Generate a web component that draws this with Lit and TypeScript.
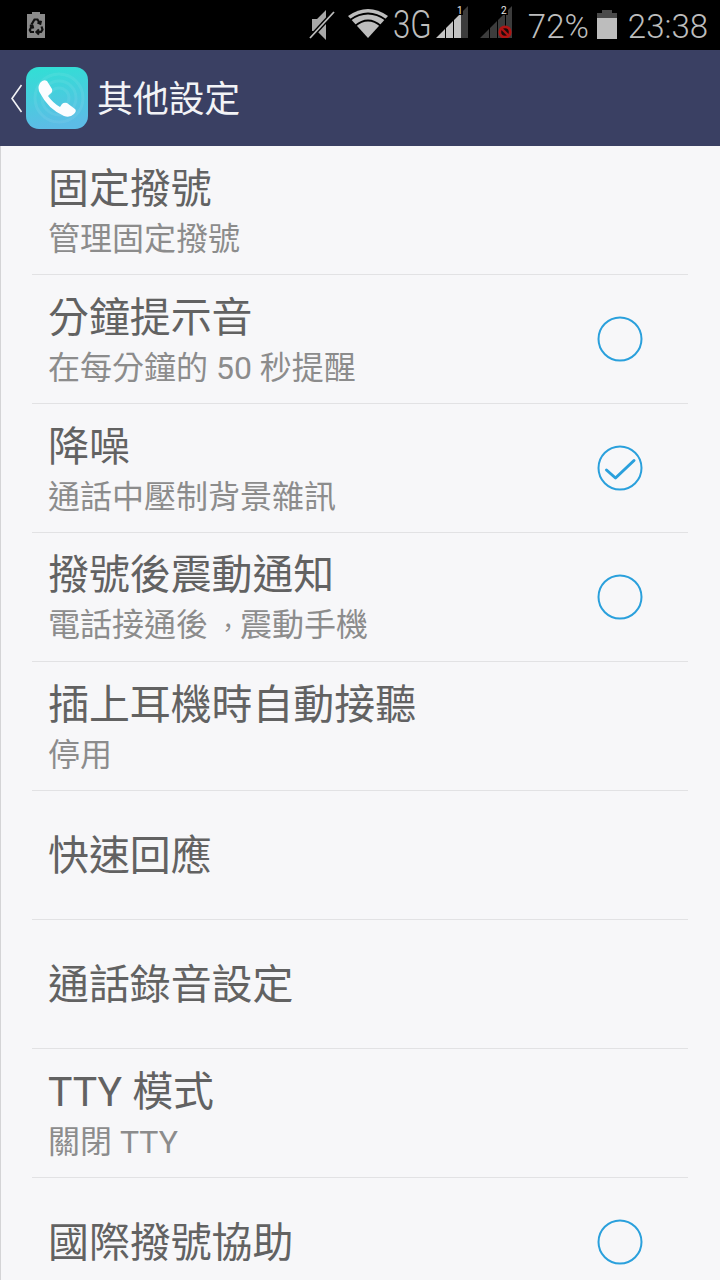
import { LitElement, html, css, svg } from "lit";
import { customElement } from "lit/decorators.js";

type Row = { t: string; s?: string; c?: "off" | "on" };
const rows: Row[] = [
  { t: "固定撥號", s: "管理固定撥號" },
  { t: "分鐘提示音", s: "在每分鐘的 50 秒提醒", c: "off" },
  { t: "降噪", s: "通話中壓制背景雜訊", c: "on" },
  { t: "撥號後震動通知", s: "電話接通後|，|震動手機", c: "off" },
  { t: "插上耳機時自動接聽", s: "停用" },
  { t: "快速回應" },
  { t: "通話錄音設定" },
  { t: "TTY 模式", s: "關閉 TTY" },
  { t: "國際撥號協助", c: "off" },
];

@customElement("app-root")
export class AppRoot extends LitElement {
  static styles = css`
    :host {
      display: block;
      width: 720px;
      height: 1280px;
      overflow: hidden;
      background: #f7f7f9;
      font-family: "Roboto", "Noto Sans CJK TC", sans-serif;
    }
    .status {
      height: 50px;
      background: #000;
      display: flex;
      align-items: center;
      color: #bdbdbd;
      font-size: 33px;
      padding: 0 12px 0 27px;
      box-sizing: border-box;
    }
    .status svg { display: block; flex: none; }
    .spacer { flex: 1; }
    .mute { margin-bottom: 2px; }
    .wifi { margin-left: 13px; margin-bottom: 5px; }
    .g3 {
      display: block;
      width: 38px;
      margin-left: 5px;
      font-size: 38px;
      font-weight: 300;
      line-height: 46px;
      white-space: nowrap;
      transform: scaleX(0.82);
      transform-origin: left center;
    }
    .sig1 { margin-left: 5px; margin-bottom: 6px; }
    .sig2 { margin-left: 12px; margin-bottom: 6px; }
    .pct { margin-left: 16px; margin-top: 2px; font-weight: 300; }
    .batt { margin-left: 8px; margin-bottom: 1px; }
    .time { margin-left: 11px; margin-top: 2px; font-weight: 300; }
    .bar {
      height: 96px;
      background: #3a4063;
      display: flex;
      align-items: center;
      color: #f2f3f6;
      font-size: 36px;
      padding-left: 10px;
      box-sizing: border-box;
    }
    .bar span { margin-top: -4px; letter-spacing: -0.25px; }
    .logo { margin-left: 3px; margin-right: 9px; }
    .bar svg { display: block; flex: none; }
    .list {
      border-left: 1px solid #d4d4d6;
      height: 1134px;
      overflow: hidden;
      box-sizing: border-box;
    }
    .row {
      height: 129px;
      margin: 0 32px 0 31px;
      padding: 0 17px 0 17px;
      border-bottom: 1px solid #e2e2e4;
      box-sizing: border-box;
      display: flex;
      align-items: center;
      justify-content: space-between;
    }
    .text { display: flex; flex-direction: column; margin-left: -1px; padding-top: 2px; }
    .t { font-size: 40.9px; line-height: 54px; color: #626262; }
    .s { font-size: 32px; line-height: 42px; color: #8c8c8c; margin-top: 2px; }
    .cm { font-size: 24px; padding-left: 8px; }
    .c { margin-right: 28px; display: block; flex: none; }
  `;

  private check(kind: "off" | "on") {
    return html`<svg class="c" width="46" height="46" viewBox="0 0 46 46" fill="none" stroke="#2aa0dc">
      <circle cx="23" cy="23" r="21.5" stroke-width="2"></circle>
      ${kind === "on"
        ? svg`<path d="M9.500 25 L18.500 33 L37 15.500" stroke-width="3" stroke-linecap="round" stroke-linejoin="round"></path>`
        : ""}
    </svg>`;
  }

  private sub(s: string) {
    const p = s.split("|");
    return p.length === 3 ? html`${p[0]}<span class="cm">${p[1]}</span>${p[2]}` : s;
  }

  render() {
    return html`
      <div class="status">
        <svg width="18" height="26" viewBox="0 0 18 26">
          <path d="M5 0h8v2h5v24H0V2h5z" fill="#8a8a8a"></path>
          <g fill="none" stroke="#111" stroke-width="2.200">
            <path d="M4.500 12.500L7.500 7.500h3l2.500 4"></path>
            <path d="M10.500 10.500l2.800 1.300 .7-3"></path>
            <path d="M14.500 14.500l1 3-1.500 2.500h-4"></path>
            <path d="M12 17.500L9.500 20l2.500 2.500"></path>
            <path d="M7 20H3.800l-1-2 2-4"></path>
            <path d="M2.800 13.500l2.700 .3 .7 2.700"></path>
          </g>
        </svg>
        <div class="spacer"></div>
        <svg class="mute" width="26" height="34" viewBox="0 0 26 34">
          <path d="M3 12h5l9-9v30l-9-9H3z" fill="#a8a8a8"></path>
          <path d="M1 31L25 5" stroke="#000" stroke-width="4.500"></path>
          <path d="M1 31L25 5" stroke="#bdbdbd" stroke-width="1.800"></path>
        </svg>
        <svg class="wifi" width="40" height="30" viewBox="0 0 40 30">
          <path d="M0 8Q20 -6 40 8L20 30z" fill="#bdbdbd"></path>
          <g fill="none" stroke="#000" stroke-width="1.800">
            <path d="M2 12Q20 -1 38 12"></path>
            <path d="M7 18Q20 7 33 18"></path>
          </g>
        </svg>
        <span class="g3">3G</span>
        <svg class="sig1" width="32" height="32" viewBox="0 0 32 32">
          <path d="M25 7L32 0v32h-7z" fill="#3c3c3c"></path>
          <path d="M0 32L9 23v9zM10 32V22l7-7v17zM18 32V14l7-7v25z" fill="#c4c4c4"></path>
          <rect x="21" y="0" width="6" height="9" fill="#000"></rect>
          <text x="21" y="8" font-size="10" fill="#e8e8e8" font-family="Roboto">1</text>
        </svg>
        <svg class="sig2" width="32" height="32" viewBox="0 0 32 32">
          <path d="M0 32L9 23v9zM10 32V22l7-7v17zM18 32V14l7-7v25zM26 6l6-6v32h-6z" fill="#3c3c3c"></path>
          <rect x="21" y="0" width="7" height="9" fill="#000"></rect>
          <text x="21" y="8" font-size="10" fill="#e8e8e8" font-family="Roboto">2</text>
          <circle cx="25" cy="26" r="5.200" fill="#1a0a0a" stroke="#b01414" stroke-width="2.800"></circle>
          <path d="M21.500 22.500l7 7" stroke="#b01414" stroke-width="2.400"></path>
        </svg>
        <span class="pct">72%</span>
        <svg class="batt" width="20" height="29" viewBox="0 0 20 29">
          <path d="M5 0h10v3h5v6H0V3h5z" fill="#4a4a4a"></path>
          <path d="M0 8h20v21H0z" fill="#bdbdbd"></path>
        </svg>
        <span class="time">23:38</span>
      </div>
      <div class="bar" lang="zh-Hant">
        <svg width="13" height="29" viewBox="0 0 13 29" fill="none" stroke="#f2f3f6" stroke-width="1.600">
          <path d="M11.500 1L2 14.500 11.500 28"></path>
        </svg>
        <svg class="logo" width="62" height="62" viewBox="0 0 62 62">
          <defs>
            <linearGradient id="g" x1="0" y1="0" x2="0.150" y2="1">
              <stop offset="0" stop-color="#30e0d4"></stop>
              <stop offset="1" stop-color="#5cbce6"></stop>
            </linearGradient>
          </defs>
          <rect width="62" height="62" rx="13" fill="url(#g)"></rect>
          <g fill="none" stroke="#fff" stroke-opacity="0.070" stroke-width="3">
            <circle cx="33" cy="31" r="10"></circle>
            <circle cx="33" cy="31" r="17"></circle>
            <circle cx="33" cy="31" r="24"></circle>
          </g>
          <path d="M14 16Q17 12 21 14L26 22Q27 25 24 27L22 29Q27 36 34 40L36 37Q38 35 41 36L49 42Q51 44 48 47Q44 51 38 49Q22 42 14 26Q11 21 14 16Z" fill="#fbfdff"></path>
        </svg>
        <span>其他設定</span>
      </div>
      <div class="list" lang="zh-Hant">
        ${rows.map(
          (r) => html`<div class="row">
            <div class="text">
              <div class="t">${r.t}</div>
              ${r.s ? html`<div class="s">${this.sub(r.s)}</div>` : ""}
            </div>
            ${r.c ? this.check(r.c) : ""}
          </div>`
        )}
      </div>
    `;
  }
}
